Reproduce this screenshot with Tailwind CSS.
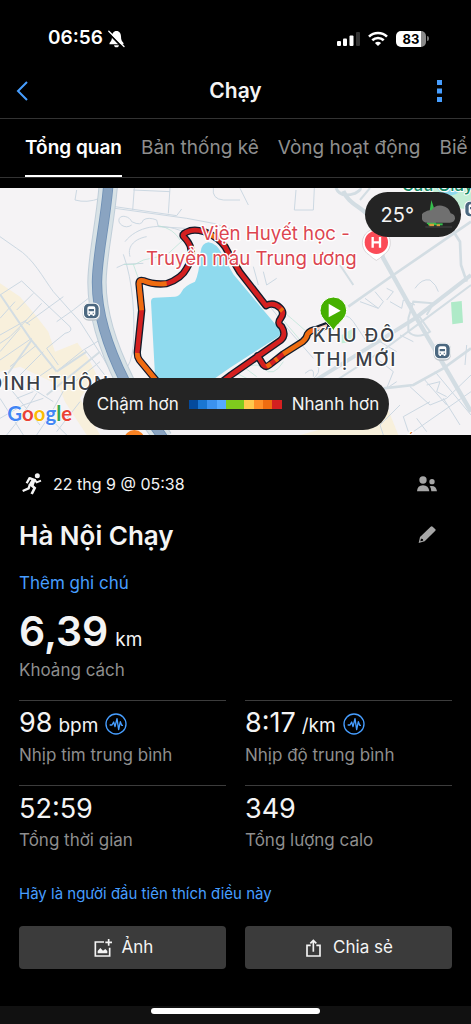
<!DOCTYPE html>
<html lang="vi">
<head>
  <meta charset="UTF-8">
  <meta name="viewport" content="width=device-width, initial-scale=1.0">
  <title>Chạy</title>
  <script src="https://cdn.jsdelivr.net/npm/@tailwindcss/browser@4"></script>
</head>
<body class="bg-black text-[#f4f4f4] font-['Inter','Noto_Sans',sans-serif] min-h-screen flex flex-col overflow-x-hidden">

  <!-- Status bar -->
  <div class="h-16 pt-[13px] pl-12 pr-[42px] flex items-center justify-between text-white">
    <div class="flex items-center gap-[5px]">
      <span class="text-[19px] font-semibold">06:56</span>
      <svg class="w-[17px] h-[18px]" viewBox="0 0 17 18" fill="none">
        <path d="M8.500 1C5.500 1 4 3.500 4 6.500C4 10 3 11.500 1.500 13V14.300H15.500V13C14 11.500 13 10 13 6.500C13 3.500 11.500 1 8.500 1Z" fill="#fff"/>
        <path d="M6 15.200H11C10.600 16.800 9.800 17.300 8.500 17.300S6.400 16.800 6 15.200Z" fill="#fff"/>
        <path d="M0 2.500L14.500 17.500" stroke="#000" stroke-width="1.800"/>
        <path d="M0.800 1.200L16 16.500" stroke="#fff" stroke-width="1.300" stroke-linecap="round"/>
      </svg>
    </div>
    <div class="flex items-center gap-2">
      <svg class="w-[23px] h-4" viewBox="0 0 23 16">
        <rect x="0" y="10" width="4" height="5" rx="1" fill="#fff"/>
        <rect x="6" y="7.500" width="4" height="7.500" rx="1" fill="#fff"/>
        <rect x="12.500" y="4.500" width="4" height="10.500" rx="1" fill="#fff"/>
        <rect x="19" y="1" width="4" height="14" rx="1" fill="#333"/>
      </svg>
      <svg class="w-5 h-4" viewBox="0 0 20 16" fill="none" stroke="#fff" stroke-width="2.600">
        <path d="M1 5.600C6 0.700 14 0.700 19 5.600"/>
        <path d="M4.300 9.300C7.500 6.300 12.500 6.300 15.700 9.300"/>
        <path d="M10 15L6.900 11.900C8.600 10.400 11.400 10.400 13.100 11.900Z" fill="#fff" stroke="none"/>
      </svg>
      <div class="flex items-center gap-px">
        <span class="w-[30px] h-4 rounded-[5px] bg-linear-to-r from-white from-83% to-[#8a8a8a] to-83% text-black text-[13px] leading-4 font-bold text-center">83</span>
        <span class="w-[2px] h-[5px] rounded-r bg-[#777]"></span>
      </div>
    </div>
  </div>

  <!-- Header -->
  <header class="h-[55px] px-4 flex items-center justify-between border-b border-[#333]">
    <button type="button" aria-label="Quay lại" class="w-8 h-8 flex items-center">
      <svg class="w-3 h-5" viewBox="0 0 12 20" fill="none" stroke="#479eff" stroke-width="2"><path d="M11 1L2 10L11 19"/></svg>
    </button>
    <h1 class="text-[21px] font-semibold">Chạy</h1>
    <button type="button" aria-label="Thêm" class="w-8 h-8 flex items-center justify-center">
      <svg class="w-[5px] h-[22px]" viewBox="0 0 5 22" fill="#479eff"><path d="M0 0H5V5H0ZM0 8.500H5V13.500H0ZM0 17H5V22H0Z"/></svg>
    </button>
  </header>

  <!-- Tabs -->
  <nav class="h-[59px] pl-[25px] flex gap-[19px] overflow-hidden whitespace-nowrap text-[19px] text-[#8e8e8e] border-b border-[#333]">
    <a href="#" class="h-full pt-[2px] flex items-center border-b-2 border-white text-white font-semibold">Tổng quan</a>
    <a href="#" class="h-full pt-[2px] flex items-center border-b-2 border-transparent">Bản thống kê</a>
    <a href="#" class="h-full pt-[2px] flex items-center border-b-2 border-transparent">Vòng hoạt động</a>
    <a href="#" class="h-full pt-[2px] flex items-center border-b-2 border-transparent">Biể</a>
  </nav>

  <!-- Map -->
  <div class="relative mt-[10px] h-[247px] overflow-hidden bg-[#f5f3f5]">
    <svg class="w-full h-full" viewBox="0 9 1413 741" preserveAspectRatio="xMidYMid slice" fill="none">
      <rect y="9" width="1413" height="741" fill="#f5f3f5"/>

      <!-- built-up areas -->
      <path d="M0 295L60 335L110 395L145 440L165 500L232 473L265 520L290 570L240 640L300 750H260L195 650L175 600L60 545L0 560Z" fill="#f8f0dc"/>
      <path d="M900 750L1120 690L1165 675L1195 750Z" fill="#f8f0dc"/>
      <path d="M1225 9H1413V75L1380 70C1340 60 1280 30 1225 9Z" fill="#c4eed6"/>
      <path d="M1310 9H1385L1372 25C1350 38 1325 30 1310 9Z" fill="#8fdaee"/>
      <path d="M1353 352L1385 348L1389 413L1357 418Z" fill="#afeac8"/>
      <path d="M1025 450L1060 430L1068 435L1050 472L1025 475Z" fill="#c4eed6"/>

      <!-- minor streets -->
      <g stroke="#ccd8e2" stroke-width="3">
        <path d="M0 155L50 190C100 220 130 280 160 320L240 410L310 520L350 590"/>
        <path d="M230 15L225 45Q260 55 300 40M403 9L398 75M510 9L505 85M345 65L530 92L545 72M400 15L510 20M345 70L560 100L640 115L720 140"/>
        <path d="M395 120C375 135 350 115 358 100C365 88 390 95 395 110Q425 125 430 105Q445 95 470 105L475 125L555 130"/>
        <path d="M375 170C410 125 480 110 550 140M350 248L372 238L430 235M370 208C400 290 405 400 400 480Q395 540 370 560"/>
        <path d="M390 215C380 180 410 160 440 155"/>
        <path d="M640 9Q635 42 670 45H720"/>
        <path d="M65 288L210 425Q220 440 195 445L140 490L175 540M0 330L65 288M50 375L100 325M80 415L190 335M75 410L30 455L0 475M125 355L75 410L90 420M170 410L220 375L265 340M0 450L80 405M0 400L45 350M0 525L95 460M0 500L60 430M30 545L110 480M60 570L130 500M95 590L160 545"/>
        <path d="M175 555L250 495L300 465M225 590L300 530M255 495L330 590M200 600L150 690L110 750M240 650L170 740M0 640L70 750M30 610L120 720M80 600L160 650M110 625L60 700L20 750M0 700L70 660L130 640M50 640L100 620M140 690L200 750"/>
        <path d="M888 15L883 75H940L943 9M720 10L745 60M730 270L790 340L870 440L940 520M760 245L775 300M790 260L800 300L830 280"/>
        <path d="M1095 340L1135 370L1150 350L1125 320M1135 370L1080 350M1160 345L1180 320L1160 310M1170 350L1205 370L1210 345L1245 360M1245 310Q1265 280 1290 285Q1310 300 1315 320"/>
        <path d="M1010 400Q1040 380 1060 410L1100 470M1090 440L1190 500M1130 520L1180 560L1160 610L1190 590"/>
        <path d="M1230 605L1290 660M1270 580L1340 660M1305 560L1413 690M1210 695L1290 650M1290 660L1340 640L1413 570M1240 740L1413 620M1250 700L1280 740M1330 640L1380 720M1280 600L1320 590L1310 620L1340 635M1210 695L1225 740"/>
        <path d="M915 565Q945 540 940 575M930 590Q970 560 950 540M1150 750L1140 720L1200 660"/>
        <path d="M1290 470L1330 520M1400 480L1395 540M1200 450L1240 470"/>
      </g>

      <!-- main streets -->
      <g stroke="#d3dde3" stroke-width="8">
        <path d="M0 328L90 460L170 560M170 560L260 500M0 600L95 465M140 630L300 500" stroke-width="6"/>
        <path d="M1030 18C1045 55 1075 60 1110 95L1150 220L1250 400L1413 680" stroke-width="13"/>
        <path d="M1008 9Q1020 40 1065 25Q1085 15 1080 9" stroke-width="9"/>
        <path d="M1045 365L1180 270L1413 110"/>
        <path d="M940 590L1110 485L1245 400L1413 270" stroke-width="12"/>
        <path d="M980 605L1150 495L1265 410L1413 300" stroke-width="6"/>
        <path d="M1150 610L1240 600L1330 550L1413 490"/>
        <path d="M1310 60L1380 170L1383 240L1400 290"/>
        <path d="M1020 240L1060 300M1225 400L1240 350L1300 355L1280 390M1225 400L1225 440Q1250 465 1290 440L1255 390" stroke-width="6"/>
        <path d="M1080 45L1110 9" stroke-width="6"/>
      </g>

      <!-- footpaths -->
      <g stroke="#b5e3d3" stroke-width="2">
        <path d="M372 238H405L430 225L500 210L560 155M400 238L415 280M475 122Q520 130 540 165"/>
        <path d="M850 380Q910 430 935 455M845 400L900 465M690 580Q760 520 790 550T850 530M700 560L760 590M730 545L770 575"/>
      </g>

      <!-- motorway -->
      <path d="M325 0C315 120 292 210 291 290C290 410 350 540 375 590C400 650 450 700 490 760" stroke="#c0ced9" stroke-width="58"/>
      <path d="M325 0C315 120 292 210 291 290C290 410 350 540 375 590C400 650 450 700 490 760" stroke="#d8e2e6" stroke-width="52"/>
      <path d="M325 0C315 120 292 210 291 290C290 410 350 540 375 590C400 650 450 700 490 760" stroke="#6f90b5" stroke-width="31"/>
      <path d="M325 0C315 120 292 210 291 290C290 410 350 540 375 590C400 650 450 700 490 760" stroke="#8aa4c1" stroke-width="26"/>

      <!-- lake -->
      <path d="M602 200Q605 175 625 172Q650 175 665 205L700 268L838 432Q845 445 835 455L690 548L630 590H466L453 350Q453 338 465 338L525 335Q538 333 545 320Q552 303 585 290Q598 265 602 200Z" fill="#8fdaee"/>

      <!-- route -->
      <g stroke-linejoin="round" stroke-linecap="round">
        <path d="M480 600L418 525Q411 515 412 500L425 376L417 296Q417 283 430 287Q460 300 500 296Q545 280 560 250Q580 220 572 190Q570 175 550 154Q545 145 570 137Q600 130 640 153Q670 170 683 200L720 262L798 362Q820 350 840 368Q855 382 842 400Q830 415 845 425Q860 450 842 466L693 570L640 610M773 512L790 540Q798 548 808 540L850 507L908 470Q920 460 922 448Q930 435 950 433L980 422" stroke="#111c2c" stroke-width="22"/>
        <path d="M480 600L418 525Q411 515 412 500L425 376L417 296Q417 283 430 287Q460 300 500 296Q545 280 560 250Q580 220 572 190Q570 175 550 154Q545 145 570 137Q600 130 640 153Q670 170 683 200L720 262L798 362Q820 350 840 368Q855 382 842 400Q830 415 845 425Q860 450 842 466L693 570L640 610M773 512L790 540Q798 548 808 540L850 507" stroke="#d42020" stroke-width="14"/>
        <g stroke="#ee6c10" stroke-width="14" stroke-linecap="butt">
          <path d="M480 600L418 525Q411 515 412 504M425 376L417 296Q417 283 430 287Q460 300 500 296"/>
          <path d="M634 150L648 158M841 371L848 378M800 545L812 537M825 527L833 521M850 507L908 470Q920 460 922 448Q930 435 950 433"/>
        </g>
        <path d="M950 433L978 422" stroke="#f5c9b8" stroke-width="8"/>
      </g>

      <!-- transit stops -->
      <g>
        <g transform="translate(274 379)">
          <rect x="-26" y="-26" width="52" height="54" rx="18" fill="#bcc4ca"/>
          <rect x="-25" y="-26" width="50" height="50" rx="17" fill="#fff"/><rect x="-22" y="-23" width="44" height="44" rx="14" fill="#4c6880"/>
          <path d="M-12 -9Q-12 -15 -6 -15H6Q12 -15 12 -9V10H9V14H4V10H-4V14H-9V10H-12Z" fill="#fff"/><path d="M-8 -7H8V0H-8ZM-8 4H-4V7H-8ZM4 4H8V7H4Z" fill="#4c6880"/>
        </g>
        <g transform="translate(1327 499)">
          <rect x="-26" y="-26" width="52" height="54" rx="18" fill="#bcc4ca"/>
          <rect x="-25" y="-26" width="50" height="50" rx="17" fill="#fff"/><rect x="-22" y="-23" width="44" height="44" rx="14" fill="#4c6880"/>
          <path d="M-12 -9Q-12 -15 -6 -15H6Q12 -15 12 -9V10H9V14H4V10H-4V14H-9V10H-12Z" fill="#fff"/><path d="M-8 -7H8V0H-8ZM-8 4H-4V7H-8ZM4 4H8V7H4Z" fill="#4c6880"/>
        </g>
        <g transform="translate(1418 73)">
          <rect x="-25" y="-26" width="50" height="50" rx="17" fill="#fff"/><rect x="-22" y="-23" width="44" height="44" rx="14" fill="#4c6880"/>
          <path d="M-12 -9Q-12 -15 -6 -15H6Q12 -15 12 -9V10H9V14H4V10H-4V14H-9V10H-12Z" fill="#fff"/><path d="M-8 -7H8V0H-8Z" fill="#4c6880"/>
        </g>
      </g>
      <circle cx="403" cy="766" r="31" fill="#f98324"/>

      <!-- hospital pin -->
      <path d="M1129 226Q1120 222 1108 210A42 42 0 1 1 1150 210Q1138 222 1129 226Z" fill="#fff" stroke="#c8c5c8" stroke-width="2"/>
      <circle cx="1129" cy="172" r="35" fill="#fb4b57"/>
      <path d="M1118 156V188M1140 156V188M1118 172H1140" stroke="#fff" stroke-width="7"/>

      <!-- place names -->
      <g class="font-['Inter','Noto_Sans',sans-serif]" paint-order="stroke" stroke="#fff" stroke-linejoin="round">
        <g fill="#dc4550" font-size="56" stroke-width="8">
          <text x="604" y="165">Viện Huyết học -</text>
          <text x="438" y="240">Truyền máu Trung ương</text>
        </g>
        <g fill="#3a4047" font-size="56" font-weight="500" letter-spacing="5" stroke-width="7">
          <text x="-34" y="614">ĐÌNH THÔN</text>
          <text x="938" y="472">KHU ĐÔ</text>
          <text x="938" y="543">THỊ MỚI</text>
        </g>
        <text x="1205" y="18" fill="#148a65" font-size="50" font-weight="500" stroke-width="6">Cầu Giấy</text>
        <text x="1213" y="786" fill="#d9701c" font-size="46" stroke-width="6">ố</text>
      </g>

      <!-- start pin -->
      <path d="M1000 439C994 417 960 405 960 376A40 40 0 1 1 1040 376C1040 405 1006 417 1000 439Z" fill="#45b000" stroke="#fff" stroke-width="3"/>
      <path d="M986 356L1022 377L986 397Z" fill="#fff"/>

      <!-- Google wordmark -->
      <text x="22" y="708" class="font-['Lato',sans-serif]" font-size="61" font-weight="700" paint-order="stroke" stroke="#fff" stroke-width="3"><tspan fill="#4285f4">G</tspan><tspan fill="#ea4335">o</tspan><tspan fill="#fbbc05">o</tspan><tspan fill="#4285f4">g</tspan><tspan fill="#34a853">l</tspan><tspan fill="#ea4335">e</tspan></text>
    </svg>

    <!-- Weather -->
    <div class="absolute top-1 right-[10px] h-[45px] rounded-full bg-[#242424] pl-4 pr-[5px] flex items-center gap-2">
      <span class="text-xl">25°</span>
      <svg class="w-[34px] h-[30px]" viewBox="0 0 102 90">
        <path d="M28 0L38 30L42 72H14L22 40Z" fill="#35bd4c"/>
        <path d="M18 70H62V76H18Z" fill="#35bd4c"/>
        <path d="M22 71H36V79H22ZM44 73H54V79H44Z" fill="#d89a3c"/>
        <path d="M10 81H90" stroke="#454545" stroke-width="3"/>
        <path d="M16 68A17 17 0 0 1 10 35Q16 29 28 31A32 31 0 0 1 86 40Q100 44 99 56Q97 66 84 68Z" fill="#707070"/>
      </svg>
    </div>

    <!-- Pace legend -->
    <div class="absolute bottom-[5px] left-1/2 -translate-x-1/2 w-[306px] h-[52px] rounded-full bg-[#242424] pl-[5px] pt-px flex items-center justify-center gap-[10px] whitespace-nowrap text-[17px]">
      <span>Chậm hơn</span>
      <div class="flex h-[9px] w-[93px] shrink-0">
        <span class="flex-1 bg-[#044a9c]"></span>
        <span class="flex-1 bg-[#1976d2]"></span>
        <span class="flex-1 bg-[#3b92ef]"></span>
        <span class="flex-1 bg-[#55a9ff]"></span>
        <span class="flex-2 bg-[#7fca1d]"></span>
        <span class="flex-1 bg-[#ffc94d]"></span>
        <span class="flex-1 bg-[#ff9028]"></span>
        <span class="flex-1 bg-[#ef6c10]"></span>
        <span class="flex-1 bg-[#d42020]"></span>
      </div>
      <span>Nhanh hơn</span>
    </div>
  </div>

  <!-- Summary -->
  <main class="px-[19px] pt-9">
    <div class="flex items-center h-[26px] pl-[3px] pr-[15px]">
      <svg class="w-5 h-[22px]" viewBox="0 0 60 66" fill="none" stroke="#f4f4f4">
        <circle cx="46" cy="8" r="7.500" fill="#f4f4f4" stroke="none"/>
        <path d="M24 12L42 19L34 40L20 35L28 21L24 20L17 32L11 29L20 13Z" fill="#f4f4f4" stroke="none"/>
        <path d="M38 20L44 28L57 23" stroke-width="6"/>
        <path d="M24 33L20 46L2 54" stroke-width="7"/>
        <path d="M25 34L38 45L29 63" stroke-width="8"/>
      </svg>
      <span class="ml-[11px] text-base">22 thg 9 @ 05:38</span>
      <button type="button" aria-label="Người xem" class="ml-auto">
        <svg class="w-5 h-4" viewBox="0 0 60 48" fill="#a6a6a6">
          <circle cx="18" cy="12" r="11"/><circle cx="45" cy="17" r="8"/>
          <path d="M0 46Q1 28 18 28T37 46ZM38 31Q57 27 60 46H43Q43 36 38 31Z"/>
        </svg>
      </button>
    </div>
    <div class="flex items-center h-9 mt-5 pr-4">
      <h2 class="text-[26px] font-semibold">Hà Nội Chạy</h2>
      <button type="button" aria-label="Sửa tên" class="ml-auto">
        <svg class="w-[18px] h-[18px]" viewBox="0 0 54 54" fill="#a6a6a6">
          <path d="M38 2Q41 -1 44 2L52 10Q54 12 52 14L20 46L2 51L6 33ZM9 38L7 46L15 44Q17 37 9 38Z" fill-rule="evenodd"/>
        </svg>
      </button>
    </div>
    <a href="#" class="block mt-[18px] text-[17px] leading-6 text-[#479eff]">Thêm ghi chú</a>
    <p class="mt-3 h-12 flex items-baseline gap-[7px] leading-[48px]"><span class="text-[41px] font-semibold">6,39</span><span class="text-[19px]">km</span></p>
    <p class="mt-[3px] text-[17px] leading-6 text-[#8e8e8e]">Khoảng cách</p>

    <div class="grid grid-cols-2 gap-x-[19px] mt-[18px]">
      <div class="border-t border-[#3c3c3c] h-[85px] pt-1">
        <div class="flex items-center gap-[7px] h-[38px]">
          <p class="flex items-baseline gap-[6px] leading-[38px]"><span class="text-[27px]">98</span><span class="text-[19px]">bpm</span></p>
          <svg class="w-[22px] h-[22px]" viewBox="0 0 66 66" fill="none" stroke="#479eff" stroke-width="4"><circle cx="33" cy="33" r="30"/><path d="M14 36H21L26 27L30 41L36 17L41 50L46 26L50 37H54" stroke-linejoin="round"/></svg>
        </div>
        <p class="text-[17px] leading-6 text-[#8e8e8e]">Nhịp tim trung bình</p>
      </div>
      <div class="border-t border-[#3c3c3c] h-[85px] pt-1">
        <div class="flex items-center gap-[7px] h-[38px]">
          <p class="flex items-baseline gap-[6px] leading-[38px]"><span class="text-[27px]">8:17</span><span class="text-[19px]">/km</span></p>
          <svg class="w-[22px] h-[22px]" viewBox="0 0 66 66" fill="none" stroke="#479eff" stroke-width="4"><circle cx="33" cy="33" r="30"/><path d="M14 36H21L26 27L30 41L36 17L41 50L46 26L50 37H54" stroke-linejoin="round"/></svg>
        </div>
        <p class="text-[17px] leading-6 text-[#8e8e8e]">Nhịp độ trung bình</p>
      </div>
      <div class="border-t border-[#3c3c3c] h-[85px] pt-1">
        <p class="text-[27px] leading-[38px]">52:59</p>
        <p class="text-[17px] leading-6 text-[#8e8e8e]">Tổng thời gian</p>
      </div>
      <div class="border-t border-[#3c3c3c] h-[85px] pt-1">
        <p class="text-[27px] leading-[38px]">349</p>
        <p class="text-[17px] leading-6 text-[#8e8e8e]">Tổng lượng calo</p>
      </div>
    </div>

    <a href="#" class="block mt-3 text-[15px] leading-6 text-[#479eff]">Hãy là người đầu tiên thích điều này</a>

    <div class="grid grid-cols-2 gap-[19px] mt-5">
      <button type="button" class="h-[43px] pl-[2px] rounded bg-[#3b3b3b] text-[17px] flex items-center justify-center gap-[10px]">
        <svg class="w-[18px] h-[18px]" viewBox="0 0 54 54" fill="none" stroke="#f4f4f4" stroke-width="5">
          <path d="M30 9H4V51H47V26M34 10H54M44 0V20"/><path d="M11 43V36L19 27L27 35L34 30L40 36V43Z" fill="#f4f4f4" stroke="none"/>
        </svg>
        Ảnh
      </button>
      <button type="button" class="h-[43px] pl-[2px] rounded bg-[#3b3b3b] text-[17px] flex items-center justify-center gap-3">
        <svg class="w-[15px] h-[18px]" viewBox="0 0 45 54" fill="none" stroke="#f4f4f4" stroke-width="5">
          <path d="M14 19H3V51H42V19H31M22 38V4M13 13L22 4L31 13"/>
        </svg>
        Chia sẻ
      </button>
    </div>
  </main>

  <footer class="mt-auto h-[18px] pt-[2px] bg-[#111]">
    <div class="mx-auto w-[36%] h-[6px] rounded-full bg-white"></div>
  </footer>
</body>
</html>
